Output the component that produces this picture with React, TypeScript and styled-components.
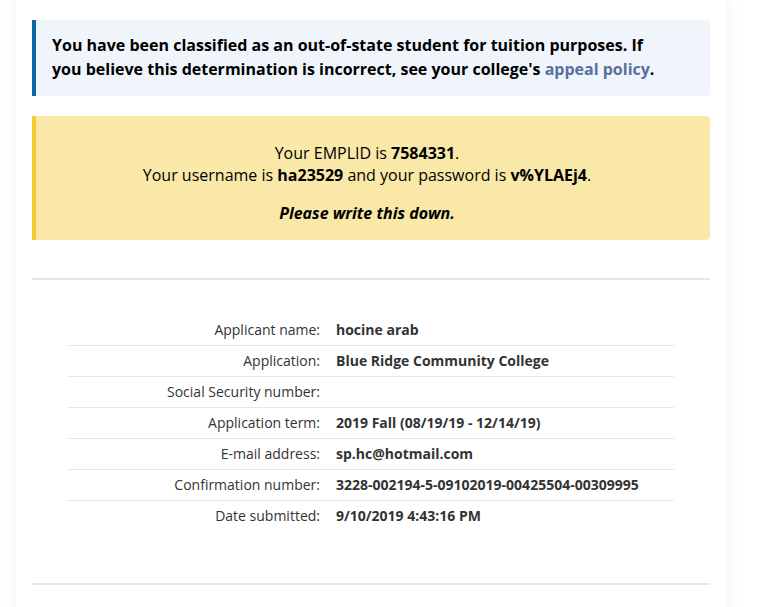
import styled, { createGlobalStyle } from "styled-components";

const GlobalStyle = createGlobalStyle`
  body {
    margin: 0;
    background: #ffffff;
    font-family: "Open Sans", "Liberation Sans", sans-serif;
    color: #000000;
  }
`;

const Page = styled.div`
  padding-left: 16px;
  height: 607px;
  overflow: hidden;
`;

const Card = styled.main`
  width: 678px;
  min-height: 640px;
  padding: 20px 16px;
  background: #ffffff;
  box-shadow: 0 0 18px rgba(0, 0, 0, 0.06);
`;

const Notice = styled.div<{ $tone: "info" | "warn" }>`
  border-left: 4px solid ${(p) => (p.$tone === "info" ? "#0b6aa2" : "#f5cd2f")};
  background: ${(p) => (p.$tone === "info" ? "#eff5fa" : "#f9e8a8")};
  border-radius: 0 4px 4px 0;
  font-size: 16px;
`;

const InfoText = styled.p`
  margin: 0;
  padding: 13px 48px 15px 16px;
  line-height: 24px;
  font-weight: 700;
`;

const Link = styled.a`
  color: #5b6f9e;
  text-decoration: none;
`;

const Credentials = styled.div`
  margin-top: 20px;
  padding: 26px 28px 16px 16px;
  text-align: center;
  line-height: 22px;
`;

const Line = styled.p<{ $gap?: boolean }>`
  margin: ${(p) => (p.$gap ? "16px" : "0")} 0 0;
`;

const Divider = styled.hr<{ $top: number }>`
  margin: ${(p) => p.$top}px 0 0;
  border: none;
  border-top: 2px solid #e6e6e6;
`;

const Details = styled.dl`
  margin: 35px 36px 0;
  font-size: 14px;
  color: #333333;
`;

const Row = styled.div`
  display: grid;
  grid-template-columns: 252px 1fr;
  column-gap: 16px;
  padding: 5px 0;
  line-height: 20px;
  border-top: 1px solid #e6e6e6;

  &:first-child {
    border-top: none;
  }
`;

const Label = styled.dt`
  text-align: right;
`;

const Value = styled.dd`
  margin: 0;
  font-weight: 700;
`;

const rows: [string, string][] = [
  ["Applicant name:", "hocine arab"],
  ["Application:", "Blue Ridge Community College"],
  ["Social Security number:", ""],
  ["Application term:", "2019 Fall (08/19/19 - 12/14/19)"],
  ["E-mail address:", "sp.hc@hotmail.com"],
  ["Confirmation number:", "3228-002194-5-09102019-00425504-00309995"],
  ["Date submitted:", "9/10/2019 4:43:16 PM"],
];

export default function App() {
  return (
    <Page>
      <GlobalStyle />
      <Card>
        <Notice $tone="info">
          <InfoText>
            You have been classified as an out-of-state student for tuition purposes. If
            you believe this determination is incorrect, see your college's{" "}
            <Link href="#">appeal policy</Link>.
          </InfoText>
        </Notice>
        <Notice $tone="warn" as={Credentials}>
          <Line>
            Your EMPLID is <b>7584331</b>.
          </Line>
          <Line>
            Your username is <b>ha23529</b> and your password is <b>v%YLAEj4</b>.
          </Line>
          <Line $gap>
            <b>
              <i>Please write this down.</i>
            </b>
          </Line>
        </Notice>
        <Divider $top={38} />
        <Details>
          {rows.map(([label, value]) => (
            <Row key={label}>
              <Label>{label}</Label>
              <Value>{value}</Value>
            </Row>
          ))}
        </Details>
        <Divider $top={52} />
      </Card>
    </Page>
  );
}
